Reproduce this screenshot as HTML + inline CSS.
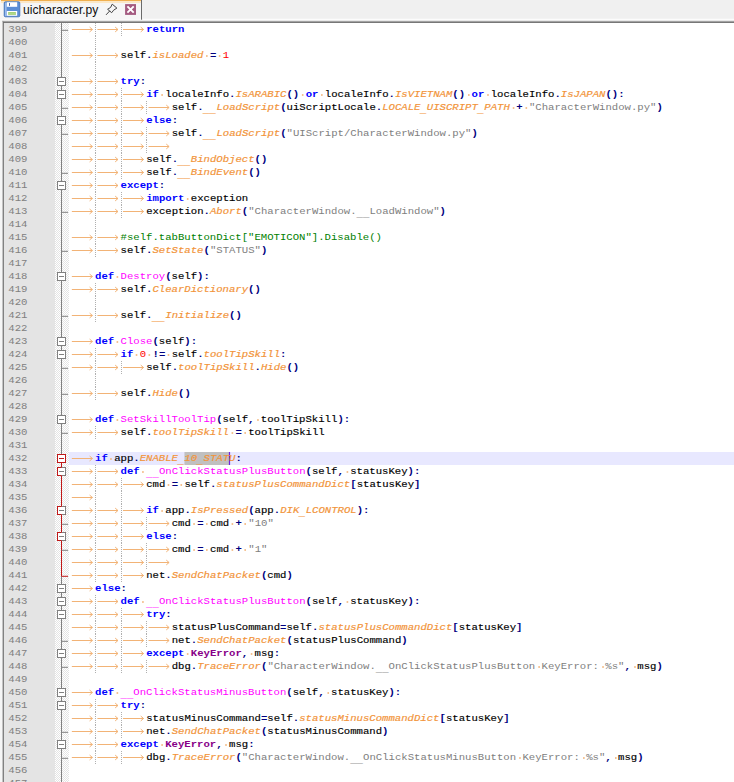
<!DOCTYPE html>
<html><head><meta charset="utf-8"><title>uicharacter.py</title><style>
html,body{margin:0;padding:0}
body{width:734px;height:782px;overflow:hidden;background:#fff;position:relative;font-family:"Liberation Mono",monospace}
#tabbar{position:absolute;left:0;top:0;width:734px;height:21px;background:#f0f0f0}
#tab{position:absolute;left:0;top:0;width:141px;height:20px;background:#f6f6f6;border-right:1.6px solid #6a6a6a}
#tabtop{position:absolute;left:1px;top:0;width:140px;height:1.4px;background:#f0b050}
#tabtop2{position:absolute;left:1px;top:1.4px;width:140px;height:1.2px;background:#fbe8c8}
#title{position:absolute;left:23.1px;top:2.5px;font:12.1px/14px "Liberation Sans",sans-serif;color:#101010;white-space:pre}
.l{position:absolute;transform:scaleY(0.87);transform-origin:0 9.34px;white-space:pre;font-size:10.648px;line-height:13.0px;height:13.0px;color:#000}
.n{position:absolute;transform:scaleY(0.87);transform-origin:0 9.34px;left:8.3px;white-space:pre;font-size:10.648px;line-height:13.0px;height:13.0px;color:#808080}
.kw{color:#0000ff;font-weight:bold}
.op{color:#000080;font-weight:bold}
.attr{color:#f2943a;font-style:italic;-webkit-text-stroke:0.2px #f2943a}
.id{-webkit-text-stroke:0.16px #000}
.u{position:relative;top:3px;font-style:inherit;font-weight:bold}
.num{color:#ff0000}
.str{color:#808080}
.cmt{color:#008000}
.dn{color:#ff00ff}
.kw2{color:#880088;font-weight:bold}
svg{position:absolute;left:0;top:0}
.g{stroke:#b0b0b0;stroke-width:1;stroke-dasharray:1 1}
.a{fill:none;stroke:#f2b376;stroke-width:1}
.d{fill:#f2b376}
</style></head><body>
<div id="tabbar"><div id="tab"></div><div id="tabtop"></div><div id="tabtop2"></div><div id="title">uicharacter.py</div></div>
<svg width="734" height="782" viewBox="0 0 734 782">
<defs><pattern id="dith" width="2" height="2" patternUnits="userSpaceOnUse"><rect width="2" height="2" fill="#ffffff"/><rect width="1" height="1" fill="#e4e4e4"/><rect x="1" y="1" width="1" height="1" fill="#e4e4e4"/></pattern></defs>
<!-- editor bg -->
<rect x="0" y="19.7" width="143" height="1.3" fill="#fcfcfc"/><rect x="143" y="18.8" width="734" height="2.2" fill="#fcfcfc"/>
<rect x="0" y="20" width="2.4" height="782" fill="#f6f6f6"/>
<rect x="2.4" y="20.8" width="734" height="1" fill="#a0a0a0"/>
<rect x="2.4" y="20.8" width="0.9" height="782" fill="#a0a0a0"/>
<rect x="3.2" y="21.8" width="734" height="1.1" fill="#696969"/>
<rect x="3.2" y="21.8" width="0.9" height="782" fill="#696969"/>
<rect x="4" y="23" width="51" height="782" fill="#e4e4e4"/>
<rect x="55" y="23" width="14" height="782" fill="url(#dith)"/>
<rect x="69" y="452.0" width="665" height="13.0" fill="#e8e8ff"/>
<rect x="184.47" y="452.0" width="44.73" height="13.0" fill="#c0c0c0"/>
<rect x="228.90" y="452.0" width="1.2" height="13.0" fill="#7020e0"/>
<line x1="61.5" y1="23" x2="61.5" y2="782" stroke="#808080" stroke-width="1"/><line x1="61.5" y1="458.5" x2="61.5" y2="576.0" stroke="#c01818" stroke-width="1"/><line x1="61.5" y1="30.3" x2="68.0" y2="30.3" stroke="#808080" stroke-width="1"/><rect x="57.5" y="77.5" width="8" height="8" fill="#fff" stroke="#808080" stroke-width="1"/><line x1="59.0" y1="81.5" x2="64.0" y2="81.5" stroke="#808080" stroke-width="1"/><rect x="57.5" y="90.5" width="8" height="8" fill="#fff" stroke="#808080" stroke-width="1"/><line x1="59.0" y1="94.5" x2="64.0" y2="94.5" stroke="#808080" stroke-width="1"/><line x1="61.5" y1="108.3" x2="68.0" y2="108.3" stroke="#808080" stroke-width="1"/><rect x="57.5" y="116.5" width="8" height="8" fill="#fff" stroke="#808080" stroke-width="1"/><line x1="59.0" y1="120.5" x2="64.0" y2="120.5" stroke="#808080" stroke-width="1"/><line x1="61.5" y1="134.3" x2="68.0" y2="134.3" stroke="#808080" stroke-width="1"/><line x1="61.5" y1="173.3" x2="68.0" y2="173.3" stroke="#808080" stroke-width="1"/><rect x="57.5" y="181.5" width="8" height="8" fill="#fff" stroke="#808080" stroke-width="1"/><line x1="59.0" y1="185.5" x2="64.0" y2="185.5" stroke="#808080" stroke-width="1"/><line x1="61.5" y1="212.3" x2="68.0" y2="212.3" stroke="#808080" stroke-width="1"/><line x1="61.5" y1="251.3" x2="68.0" y2="251.3" stroke="#808080" stroke-width="1"/><rect x="57.5" y="272.5" width="8" height="8" fill="#fff" stroke="#808080" stroke-width="1"/><line x1="59.0" y1="276.5" x2="64.0" y2="276.5" stroke="#808080" stroke-width="1"/><line x1="61.5" y1="316.3" x2="68.0" y2="316.3" stroke="#808080" stroke-width="1"/><rect x="57.5" y="337.5" width="8" height="8" fill="#fff" stroke="#808080" stroke-width="1"/><line x1="59.0" y1="341.5" x2="64.0" y2="341.5" stroke="#808080" stroke-width="1"/><rect x="57.5" y="350.5" width="8" height="8" fill="#fff" stroke="#808080" stroke-width="1"/><line x1="59.0" y1="354.5" x2="64.0" y2="354.5" stroke="#808080" stroke-width="1"/><line x1="61.5" y1="368.3" x2="68.0" y2="368.3" stroke="#808080" stroke-width="1"/><line x1="61.5" y1="394.3" x2="68.0" y2="394.3" stroke="#808080" stroke-width="1"/><rect x="57.5" y="415.5" width="8" height="8" fill="#fff" stroke="#808080" stroke-width="1"/><line x1="59.0" y1="419.5" x2="64.0" y2="419.5" stroke="#808080" stroke-width="1"/><line x1="61.5" y1="433.3" x2="68.0" y2="433.3" stroke="#808080" stroke-width="1"/><rect x="57.5" y="454.5" width="8" height="8" fill="#fff" stroke="#c01818" stroke-width="1"/><line x1="59.0" y1="458.5" x2="64.0" y2="458.5" stroke="#c01818" stroke-width="1"/><rect x="57.5" y="467.5" width="8" height="8" fill="#fff" stroke="#c01818" stroke-width="1"/><path d="M61.5 467.5H65.5V475.5H61.5" fill="none" stroke="#808080" stroke-width="1"/><line x1="59.0" y1="471.5" x2="64.0" y2="471.5" stroke="#808080" stroke-width="1"/><rect x="57.5" y="506.5" width="8" height="8" fill="#fff" stroke="#c01818" stroke-width="1"/><path d="M61.5 506.5H65.5V514.5H61.5" fill="none" stroke="#808080" stroke-width="1"/><line x1="59.0" y1="510.5" x2="64.0" y2="510.5" stroke="#808080" stroke-width="1"/><line x1="61.5" y1="524.3" x2="68.0" y2="524.3" stroke="#808080" stroke-width="1"/><rect x="57.5" y="532.5" width="8" height="8" fill="#fff" stroke="#c01818" stroke-width="1"/><path d="M61.5 532.5H65.5V540.5H61.5" fill="none" stroke="#808080" stroke-width="1"/><line x1="59.0" y1="536.5" x2="64.0" y2="536.5" stroke="#808080" stroke-width="1"/><line x1="61.5" y1="550.3" x2="68.0" y2="550.3" stroke="#808080" stroke-width="1"/><line x1="61.5" y1="576.3" x2="68.0" y2="576.3" stroke="#c01818" stroke-width="1"/><rect x="57.5" y="584.5" width="8" height="8" fill="#fff" stroke="#808080" stroke-width="1"/><line x1="59.0" y1="588.5" x2="64.0" y2="588.5" stroke="#808080" stroke-width="1"/><rect x="57.5" y="597.5" width="8" height="8" fill="#fff" stroke="#808080" stroke-width="1"/><line x1="59.0" y1="601.5" x2="64.0" y2="601.5" stroke="#808080" stroke-width="1"/><rect x="57.5" y="610.5" width="8" height="8" fill="#fff" stroke="#808080" stroke-width="1"/><line x1="59.0" y1="614.5" x2="64.0" y2="614.5" stroke="#808080" stroke-width="1"/><line x1="61.5" y1="641.3" x2="68.0" y2="641.3" stroke="#808080" stroke-width="1"/><rect x="57.5" y="649.5" width="8" height="8" fill="#fff" stroke="#808080" stroke-width="1"/><line x1="59.0" y1="653.5" x2="64.0" y2="653.5" stroke="#808080" stroke-width="1"/><line x1="61.5" y1="667.3" x2="68.0" y2="667.3" stroke="#808080" stroke-width="1"/><rect x="57.5" y="688.5" width="8" height="8" fill="#fff" stroke="#808080" stroke-width="1"/><line x1="59.0" y1="692.5" x2="64.0" y2="692.5" stroke="#808080" stroke-width="1"/><rect x="57.5" y="701.5" width="8" height="8" fill="#fff" stroke="#808080" stroke-width="1"/><line x1="59.0" y1="705.5" x2="64.0" y2="705.5" stroke="#808080" stroke-width="1"/><line x1="61.5" y1="732.3" x2="68.0" y2="732.3" stroke="#808080" stroke-width="1"/><rect x="57.5" y="740.5" width="8" height="8" fill="#fff" stroke="#808080" stroke-width="1"/><line x1="59.0" y1="744.5" x2="64.0" y2="744.5" stroke="#808080" stroke-width="1"/><line x1="61.5" y1="758.3" x2="68.0" y2="758.3" stroke="#808080" stroke-width="1"/>
<line class="g" x1="95.50" y1="23.00" x2="95.50" y2="36.00"/><line class="g" x1="121.50" y1="23.00" x2="121.50" y2="36.00"/><path class="a" d="M71.85 29.50H92.41M89.61 27.10L92.41 29.50L89.61 31.90"/><path class="a" d="M97.41 29.50H117.97M115.17 27.10L117.97 29.50L115.17 31.90"/><path class="a" d="M122.97 29.50H143.53M140.73 27.10L143.53 29.50L140.73 31.90"/><line class="g" x1="95.50" y1="36.00" x2="95.50" y2="49.00"/><line class="g" x1="95.50" y1="49.00" x2="95.50" y2="62.00"/><path class="a" d="M71.85 55.50H92.41M89.61 53.10L92.41 55.50L89.61 57.90"/><path class="a" d="M97.41 55.50H117.97M115.17 53.10L117.97 55.50L115.17 57.90"/><rect class="d" x="206.03" y="55.20" width="1.6" height="1.6"/><rect class="d" x="218.81" y="55.20" width="1.6" height="1.6"/><line class="g" x1="95.50" y1="62.00" x2="95.50" y2="75.00"/><line class="g" x1="95.50" y1="75.00" x2="95.50" y2="88.00"/><path class="a" d="M71.85 81.50H92.41M89.61 79.10L92.41 81.50L89.61 83.90"/><path class="a" d="M97.41 81.50H117.97M115.17 79.10L117.97 81.50L115.17 83.90"/><line class="g" x1="95.50" y1="88.00" x2="95.50" y2="101.00"/><line class="g" x1="121.50" y1="88.00" x2="121.50" y2="101.00"/><path class="a" d="M71.85 94.50H92.41M89.61 92.10L92.41 94.50L89.61 96.90"/><path class="a" d="M97.41 94.50H117.97M115.17 92.10L117.97 94.50L115.17 96.90"/><path class="a" d="M122.97 94.50H143.53M140.73 92.10L143.53 94.50L140.73 96.90"/><rect class="d" x="161.30" y="94.20" width="1.6" height="1.6"/><rect class="d" x="301.88" y="94.20" width="1.6" height="1.6"/><rect class="d" x="321.05" y="94.20" width="1.6" height="1.6"/><rect class="d" x="468.02" y="94.20" width="1.6" height="1.6"/><rect class="d" x="487.19" y="94.20" width="1.6" height="1.6"/><line class="g" x1="95.50" y1="101.00" x2="95.50" y2="114.00"/><line class="g" x1="121.50" y1="101.00" x2="121.50" y2="114.00"/><line class="g" x1="146.50" y1="101.00" x2="146.50" y2="114.00"/><path class="a" d="M71.85 107.50H92.41M89.61 105.10L92.41 107.50L89.61 109.90"/><path class="a" d="M97.41 107.50H117.97M115.17 105.10L117.97 107.50L115.17 109.90"/><path class="a" d="M122.97 107.50H143.53M140.73 105.10L143.53 107.50L140.73 109.90"/><path class="a" d="M148.53 107.50H169.09M166.29 105.10L169.09 107.50L166.29 109.90"/><rect class="d" x="512.75" y="107.20" width="1.6" height="1.6"/><rect class="d" x="525.54" y="107.20" width="1.6" height="1.6"/><line class="g" x1="95.50" y1="114.00" x2="95.50" y2="127.00"/><line class="g" x1="121.50" y1="114.00" x2="121.50" y2="127.00"/><path class="a" d="M71.85 120.50H92.41M89.61 118.10L92.41 120.50L89.61 122.90"/><path class="a" d="M97.41 120.50H117.97M115.17 118.10L117.97 120.50L115.17 122.90"/><path class="a" d="M122.97 120.50H143.53M140.73 118.10L143.53 120.50L140.73 122.90"/><line class="g" x1="95.50" y1="127.00" x2="95.50" y2="140.00"/><line class="g" x1="121.50" y1="127.00" x2="121.50" y2="140.00"/><line class="g" x1="146.50" y1="127.00" x2="146.50" y2="140.00"/><path class="a" d="M71.85 133.50H92.41M89.61 131.10L92.41 133.50L89.61 135.90"/><path class="a" d="M97.41 133.50H117.97M115.17 131.10L117.97 133.50L115.17 135.90"/><path class="a" d="M122.97 133.50H143.53M140.73 131.10L143.53 133.50L140.73 135.90"/><path class="a" d="M148.53 133.50H169.09M166.29 131.10L169.09 133.50L166.29 135.90"/><line class="g" x1="95.50" y1="140.00" x2="95.50" y2="153.00"/><line class="g" x1="121.50" y1="140.00" x2="121.50" y2="153.00"/><line class="g" x1="146.50" y1="140.00" x2="146.50" y2="153.00"/><path class="a" d="M71.85 146.50H92.41M89.61 144.10L92.41 146.50L89.61 148.90"/><path class="a" d="M97.41 146.50H117.97M115.17 144.10L117.97 146.50L115.17 148.90"/><path class="a" d="M122.97 146.50H143.53M140.73 144.10L143.53 146.50L140.73 148.90"/><path class="a" d="M148.53 146.50H169.09M166.29 144.10L169.09 146.50L166.29 148.90"/><line class="g" x1="95.50" y1="153.00" x2="95.50" y2="166.00"/><line class="g" x1="121.50" y1="153.00" x2="121.50" y2="166.00"/><path class="a" d="M71.85 159.50H92.41M89.61 157.10L92.41 159.50L89.61 161.90"/><path class="a" d="M97.41 159.50H117.97M115.17 157.10L117.97 159.50L115.17 161.90"/><path class="a" d="M122.97 159.50H143.53M140.73 157.10L143.53 159.50L140.73 161.90"/><line class="g" x1="95.50" y1="166.00" x2="95.50" y2="179.00"/><line class="g" x1="121.50" y1="166.00" x2="121.50" y2="179.00"/><path class="a" d="M71.85 172.50H92.41M89.61 170.10L92.41 172.50L89.61 174.90"/><path class="a" d="M97.41 172.50H117.97M115.17 170.10L117.97 172.50L115.17 174.90"/><path class="a" d="M122.97 172.50H143.53M140.73 170.10L143.53 172.50L140.73 174.90"/><line class="g" x1="95.50" y1="179.00" x2="95.50" y2="192.00"/><path class="a" d="M71.85 185.50H92.41M89.61 183.10L92.41 185.50L89.61 187.90"/><path class="a" d="M97.41 185.50H117.97M115.17 183.10L117.97 185.50L115.17 187.90"/><line class="g" x1="95.50" y1="192.00" x2="95.50" y2="205.00"/><line class="g" x1="121.50" y1="192.00" x2="121.50" y2="205.00"/><path class="a" d="M71.85 198.50H92.41M89.61 196.10L92.41 198.50L89.61 200.90"/><path class="a" d="M97.41 198.50H117.97M115.17 196.10L117.97 198.50L115.17 200.90"/><path class="a" d="M122.97 198.50H143.53M140.73 196.10L143.53 198.50L140.73 200.90"/><rect class="d" x="186.86" y="198.20" width="1.6" height="1.6"/><line class="g" x1="95.50" y1="205.00" x2="95.50" y2="218.00"/><line class="g" x1="121.50" y1="205.00" x2="121.50" y2="218.00"/><path class="a" d="M71.85 211.50H92.41M89.61 209.10L92.41 211.50L89.61 213.90"/><path class="a" d="M97.41 211.50H117.97M115.17 209.10L117.97 211.50L115.17 213.90"/><path class="a" d="M122.97 211.50H143.53M140.73 209.10L143.53 211.50L140.73 213.90"/><line class="g" x1="95.50" y1="218.00" x2="95.50" y2="231.00"/><line class="g" x1="95.50" y1="231.00" x2="95.50" y2="244.00"/><path class="a" d="M71.85 237.50H92.41M89.61 235.10L92.41 237.50L89.61 239.90"/><path class="a" d="M97.41 237.50H117.97M115.17 235.10L117.97 237.50L115.17 239.90"/><line class="g" x1="95.50" y1="244.00" x2="95.50" y2="257.00"/><path class="a" d="M71.85 250.50H92.41M89.61 248.10L92.41 250.50L89.61 252.90"/><path class="a" d="M97.41 250.50H117.97M115.17 248.10L117.97 250.50L115.17 252.90"/><path class="a" d="M71.85 276.50H92.41M89.61 274.10L92.41 276.50L89.61 278.90"/><rect class="d" x="116.58" y="276.20" width="1.6" height="1.6"/><line class="g" x1="95.50" y1="283.00" x2="95.50" y2="296.00"/><path class="a" d="M71.85 289.50H92.41M89.61 287.10L92.41 289.50L89.61 291.90"/><path class="a" d="M97.41 289.50H117.97M115.17 287.10L117.97 289.50L115.17 291.90"/><line class="g" x1="95.50" y1="296.00" x2="95.50" y2="309.00"/><line class="g" x1="95.50" y1="309.00" x2="95.50" y2="322.00"/><path class="a" d="M71.85 315.50H92.41M89.61 313.10L92.41 315.50L89.61 317.90"/><path class="a" d="M97.41 315.50H117.97M115.17 313.10L117.97 315.50L115.17 317.90"/><path class="a" d="M71.85 341.50H92.41M89.61 339.10L92.41 341.50L89.61 343.90"/><rect class="d" x="116.58" y="341.20" width="1.6" height="1.6"/><line class="g" x1="95.50" y1="348.00" x2="95.50" y2="361.00"/><path class="a" d="M71.85 354.50H92.41M89.61 352.10L92.41 354.50L89.61 356.90"/><path class="a" d="M97.41 354.50H117.97M115.17 352.10L117.97 354.50L115.17 356.90"/><rect class="d" x="135.74" y="354.20" width="1.6" height="1.6"/><rect class="d" x="148.52" y="354.20" width="1.6" height="1.6"/><rect class="d" x="167.69" y="354.20" width="1.6" height="1.6"/><line class="g" x1="95.50" y1="361.00" x2="95.50" y2="374.00"/><line class="g" x1="121.50" y1="361.00" x2="121.50" y2="374.00"/><path class="a" d="M71.85 367.50H92.41M89.61 365.10L92.41 367.50L89.61 369.90"/><path class="a" d="M97.41 367.50H117.97M115.17 365.10L117.97 367.50L115.17 369.90"/><path class="a" d="M122.97 367.50H143.53M140.73 365.10L143.53 367.50L140.73 369.90"/><line class="g" x1="95.50" y1="374.00" x2="95.50" y2="387.00"/><line class="g" x1="95.50" y1="387.00" x2="95.50" y2="400.00"/><path class="a" d="M71.85 393.50H92.41M89.61 391.10L92.41 393.50L89.61 395.90"/><path class="a" d="M97.41 393.50H117.97M115.17 391.10L117.97 393.50L115.17 395.90"/><path class="a" d="M71.85 419.50H92.41M89.61 417.10L92.41 419.50L89.61 421.90"/><rect class="d" x="116.58" y="419.20" width="1.6" height="1.6"/><rect class="d" x="257.15" y="419.20" width="1.6" height="1.6"/><line class="g" x1="95.50" y1="426.00" x2="95.50" y2="439.00"/><path class="a" d="M71.85 432.50H92.41M89.61 430.10L92.41 432.50L89.61 434.90"/><path class="a" d="M97.41 432.50H117.97M115.17 430.10L117.97 432.50L115.17 434.90"/><rect class="d" x="231.59" y="432.20" width="1.6" height="1.6"/><rect class="d" x="244.38" y="432.20" width="1.6" height="1.6"/><path class="a" d="M71.85 458.50H92.41M89.61 456.10L92.41 458.50L89.61 460.90"/><rect class="d" x="110.18" y="458.20" width="1.6" height="1.6"/><line class="g" x1="95.50" y1="465.00" x2="95.50" y2="478.00"/><path class="a" d="M71.85 471.50H92.41M89.61 469.10L92.41 471.50L89.61 473.90"/><path class="a" d="M97.41 471.50H117.97M115.17 469.10L117.97 471.50L115.17 473.90"/><rect class="d" x="142.13" y="471.20" width="1.6" height="1.6"/><rect class="d" x="346.61" y="471.20" width="1.6" height="1.6"/><line class="g" x1="95.50" y1="478.00" x2="95.50" y2="491.00"/><line class="g" x1="121.50" y1="478.00" x2="121.50" y2="491.00"/><path class="a" d="M71.85 484.50H92.41M89.61 482.10L92.41 484.50L89.61 486.90"/><path class="a" d="M97.41 484.50H117.97M115.17 482.10L117.97 484.50L115.17 486.90"/><path class="a" d="M122.97 484.50H143.53M140.73 482.10L143.53 484.50L140.73 486.90"/><rect class="d" x="167.69" y="484.20" width="1.6" height="1.6"/><rect class="d" x="180.47" y="484.20" width="1.6" height="1.6"/><line class="g" x1="95.50" y1="491.00" x2="95.50" y2="504.00"/><line class="g" x1="121.50" y1="491.00" x2="121.50" y2="504.00"/><path class="a" d="M71.85 497.50H92.41M89.61 495.10L92.41 497.50L89.61 499.90"/><line class="g" x1="95.50" y1="504.00" x2="95.50" y2="517.00"/><line class="g" x1="121.50" y1="504.00" x2="121.50" y2="517.00"/><path class="a" d="M71.85 510.50H92.41M89.61 508.10L92.41 510.50L89.61 512.90"/><path class="a" d="M97.41 510.50H117.97M115.17 508.10L117.97 510.50L115.17 512.90"/><path class="a" d="M122.97 510.50H143.53M140.73 508.10L143.53 510.50L140.73 512.90"/><rect class="d" x="161.30" y="510.20" width="1.6" height="1.6"/><line class="g" x1="95.50" y1="517.00" x2="95.50" y2="530.00"/><line class="g" x1="121.50" y1="517.00" x2="121.50" y2="530.00"/><line class="g" x1="146.50" y1="517.00" x2="146.50" y2="530.00"/><path class="a" d="M71.85 523.50H92.41M89.61 521.10L92.41 523.50L89.61 525.90"/><path class="a" d="M97.41 523.50H117.97M115.17 521.10L117.97 523.50L115.17 525.90"/><path class="a" d="M122.97 523.50H143.53M140.73 521.10L143.53 523.50L140.73 525.90"/><path class="a" d="M148.53 523.50H169.09M166.29 521.10L169.09 523.50L166.29 525.90"/><rect class="d" x="193.25" y="523.20" width="1.6" height="1.6"/><rect class="d" x="206.03" y="523.20" width="1.6" height="1.6"/><rect class="d" x="231.59" y="523.20" width="1.6" height="1.6"/><rect class="d" x="244.38" y="523.20" width="1.6" height="1.6"/><line class="g" x1="95.50" y1="530.00" x2="95.50" y2="543.00"/><line class="g" x1="121.50" y1="530.00" x2="121.50" y2="543.00"/><path class="a" d="M71.85 536.50H92.41M89.61 534.10L92.41 536.50L89.61 538.90"/><path class="a" d="M97.41 536.50H117.97M115.17 534.10L117.97 536.50L115.17 538.90"/><path class="a" d="M122.97 536.50H143.53M140.73 534.10L143.53 536.50L140.73 538.90"/><line class="g" x1="95.50" y1="543.00" x2="95.50" y2="556.00"/><line class="g" x1="121.50" y1="543.00" x2="121.50" y2="556.00"/><line class="g" x1="146.50" y1="543.00" x2="146.50" y2="556.00"/><path class="a" d="M71.85 549.50H92.41M89.61 547.10L92.41 549.50L89.61 551.90"/><path class="a" d="M97.41 549.50H117.97M115.17 547.10L117.97 549.50L115.17 551.90"/><path class="a" d="M122.97 549.50H143.53M140.73 547.10L143.53 549.50L140.73 551.90"/><path class="a" d="M148.53 549.50H169.09M166.29 547.10L169.09 549.50L166.29 551.90"/><rect class="d" x="193.25" y="549.20" width="1.6" height="1.6"/><rect class="d" x="206.03" y="549.20" width="1.6" height="1.6"/><rect class="d" x="231.59" y="549.20" width="1.6" height="1.6"/><rect class="d" x="244.38" y="549.20" width="1.6" height="1.6"/><line class="g" x1="95.50" y1="556.00" x2="95.50" y2="569.00"/><line class="g" x1="121.50" y1="556.00" x2="121.50" y2="569.00"/><line class="g" x1="146.50" y1="556.00" x2="146.50" y2="569.00"/><path class="a" d="M71.85 562.50H92.41M89.61 560.10L92.41 562.50L89.61 564.90"/><path class="a" d="M97.41 562.50H117.97M115.17 560.10L117.97 562.50L115.17 564.90"/><path class="a" d="M122.97 562.50H143.53M140.73 560.10L143.53 562.50L140.73 564.90"/><path class="a" d="M148.53 562.50H169.09M166.29 560.10L169.09 562.50L166.29 564.90"/><line class="g" x1="95.50" y1="569.00" x2="95.50" y2="582.00"/><line class="g" x1="121.50" y1="569.00" x2="121.50" y2="582.00"/><path class="a" d="M71.85 575.50H92.41M89.61 573.10L92.41 575.50L89.61 577.90"/><path class="a" d="M97.41 575.50H117.97M115.17 573.10L117.97 575.50L115.17 577.90"/><path class="a" d="M122.97 575.50H143.53M140.73 573.10L143.53 575.50L140.73 577.90"/><path class="a" d="M71.85 588.50H92.41M89.61 586.10L92.41 588.50L89.61 590.90"/><line class="g" x1="95.50" y1="595.00" x2="95.50" y2="608.00"/><path class="a" d="M71.85 601.50H92.41M89.61 599.10L92.41 601.50L89.61 603.90"/><path class="a" d="M97.41 601.50H117.97M115.17 599.10L117.97 601.50L115.17 603.90"/><rect class="d" x="142.13" y="601.20" width="1.6" height="1.6"/><rect class="d" x="346.61" y="601.20" width="1.6" height="1.6"/><line class="g" x1="95.50" y1="608.00" x2="95.50" y2="621.00"/><line class="g" x1="121.50" y1="608.00" x2="121.50" y2="621.00"/><path class="a" d="M71.85 614.50H92.41M89.61 612.10L92.41 614.50L89.61 616.90"/><path class="a" d="M97.41 614.50H117.97M115.17 612.10L117.97 614.50L115.17 616.90"/><path class="a" d="M122.97 614.50H143.53M140.73 612.10L143.53 614.50L140.73 616.90"/><line class="g" x1="95.50" y1="621.00" x2="95.50" y2="634.00"/><line class="g" x1="121.50" y1="621.00" x2="121.50" y2="634.00"/><line class="g" x1="146.50" y1="621.00" x2="146.50" y2="634.00"/><path class="a" d="M71.85 627.50H92.41M89.61 625.10L92.41 627.50L89.61 629.90"/><path class="a" d="M97.41 627.50H117.97M115.17 625.10L117.97 627.50L115.17 629.90"/><path class="a" d="M122.97 627.50H143.53M140.73 625.10L143.53 627.50L140.73 629.90"/><path class="a" d="M148.53 627.50H169.09M166.29 625.10L169.09 627.50L166.29 629.90"/><line class="g" x1="95.50" y1="634.00" x2="95.50" y2="647.00"/><line class="g" x1="121.50" y1="634.00" x2="121.50" y2="647.00"/><line class="g" x1="146.50" y1="634.00" x2="146.50" y2="647.00"/><path class="a" d="M71.85 640.50H92.41M89.61 638.10L92.41 640.50L89.61 642.90"/><path class="a" d="M97.41 640.50H117.97M115.17 638.10L117.97 640.50L115.17 642.90"/><path class="a" d="M122.97 640.50H143.53M140.73 638.10L143.53 640.50L140.73 642.90"/><path class="a" d="M148.53 640.50H169.09M166.29 638.10L169.09 640.50L166.29 642.90"/><line class="g" x1="95.50" y1="647.00" x2="95.50" y2="660.00"/><line class="g" x1="121.50" y1="647.00" x2="121.50" y2="660.00"/><path class="a" d="M71.85 653.50H92.41M89.61 651.10L92.41 653.50L89.61 655.90"/><path class="a" d="M97.41 653.50H117.97M115.17 651.10L117.97 653.50L115.17 655.90"/><path class="a" d="M122.97 653.50H143.53M140.73 651.10L143.53 653.50L140.73 655.90"/><rect class="d" x="186.86" y="653.20" width="1.6" height="1.6"/><rect class="d" x="250.76" y="653.20" width="1.6" height="1.6"/><line class="g" x1="95.50" y1="660.00" x2="95.50" y2="673.00"/><line class="g" x1="121.50" y1="660.00" x2="121.50" y2="673.00"/><line class="g" x1="146.50" y1="660.00" x2="146.50" y2="673.00"/><path class="a" d="M71.85 666.50H92.41M89.61 664.10L92.41 666.50L89.61 668.90"/><path class="a" d="M97.41 666.50H117.97M115.17 664.10L117.97 666.50L115.17 668.90"/><path class="a" d="M122.97 666.50H143.53M140.73 664.10L143.53 666.50L140.73 668.90"/><path class="a" d="M148.53 666.50H169.09M166.29 664.10L169.09 666.50L166.29 668.90"/><rect class="d" x="538.32" y="666.20" width="1.6" height="1.6"/><rect class="d" x="602.22" y="666.20" width="1.6" height="1.6"/><rect class="d" x="634.17" y="666.20" width="1.6" height="1.6"/><path class="a" d="M71.85 692.50H92.41M89.61 690.10L92.41 692.50L89.61 694.90"/><rect class="d" x="116.58" y="692.20" width="1.6" height="1.6"/><rect class="d" x="327.44" y="692.20" width="1.6" height="1.6"/><line class="g" x1="95.50" y1="699.00" x2="95.50" y2="712.00"/><path class="a" d="M71.85 705.50H92.41M89.61 703.10L92.41 705.50L89.61 707.90"/><path class="a" d="M97.41 705.50H117.97M115.17 703.10L117.97 705.50L115.17 707.90"/><line class="g" x1="95.50" y1="712.00" x2="95.50" y2="725.00"/><line class="g" x1="121.50" y1="712.00" x2="121.50" y2="725.00"/><path class="a" d="M71.85 718.50H92.41M89.61 716.10L92.41 718.50L89.61 720.90"/><path class="a" d="M97.41 718.50H117.97M115.17 716.10L117.97 718.50L115.17 720.90"/><path class="a" d="M122.97 718.50H143.53M140.73 716.10L143.53 718.50L140.73 720.90"/><line class="g" x1="95.50" y1="725.00" x2="95.50" y2="738.00"/><line class="g" x1="121.50" y1="725.00" x2="121.50" y2="738.00"/><path class="a" d="M71.85 731.50H92.41M89.61 729.10L92.41 731.50L89.61 733.90"/><path class="a" d="M97.41 731.50H117.97M115.17 729.10L117.97 731.50L115.17 733.90"/><path class="a" d="M122.97 731.50H143.53M140.73 729.10L143.53 731.50L140.73 733.90"/><line class="g" x1="95.50" y1="738.00" x2="95.50" y2="751.00"/><path class="a" d="M71.85 744.50H92.41M89.61 742.10L92.41 744.50L89.61 746.90"/><path class="a" d="M97.41 744.50H117.97M115.17 742.10L117.97 744.50L115.17 746.90"/><rect class="d" x="161.30" y="744.20" width="1.6" height="1.6"/><rect class="d" x="225.20" y="744.20" width="1.6" height="1.6"/><line class="g" x1="95.50" y1="751.00" x2="95.50" y2="764.00"/><line class="g" x1="121.50" y1="751.00" x2="121.50" y2="764.00"/><path class="a" d="M71.85 757.50H92.41M89.61 755.10L92.41 757.50L89.61 759.90"/><path class="a" d="M97.41 757.50H117.97M115.17 755.10L117.97 757.50L115.17 759.90"/><path class="a" d="M122.97 757.50H143.53M140.73 755.10L143.53 757.50L140.73 759.90"/><rect class="d" x="519.15" y="757.20" width="1.6" height="1.6"/><rect class="d" x="583.05" y="757.20" width="1.6" height="1.6"/><rect class="d" x="615.00" y="757.20" width="1.6" height="1.6"/>
<!-- save icon -->
<g>
<rect x="4.2" y="1.8" width="15.6" height="15" rx="1.2" fill="#5c8ed6" stroke="#3d6db3" stroke-width="0.8"/>
<rect x="5.2" y="2.6" width="1.3" height="13.4" fill="#a8c8f4"/>
<rect x="6.8" y="2.2" width="10.4" height="4.6" fill="#ffffff"/>
<rect x="9" y="3.1" width="1" height="2.7" fill="#4a68a8"/>
<rect x="6.8" y="11" width="10.4" height="4.8" fill="#ffffff"/>
<rect x="8.1" y="12.1" width="7.8" height="2.7" fill="#9ccc6c"/>
<rect x="8.1" y="13.2" width="7.8" height="0.5" fill="#c8e4a8"/>
</g>
<!-- pin -->
<g fill="none" stroke="#444444" stroke-width="1" stroke-linejoin="round" stroke-linecap="round">
<path d="M112.5 4.4L116.9 8.1L113.6 10.2L111.7 12.7L107.6 9.3L110.3 7.6Z"/>
<path d="M109.5 11.2L106.3 14.6"/>
</g>
<!-- close -->
<rect x="125.1" y="4.1" width="10.9" height="10.8" fill="#a45a80"/>
<path d="M127.4 6.3L133.7 12.7M133.7 6.3L127.4 12.7" stroke="#fff" stroke-width="1.9" fill="none"/>
</svg>
<div class="n" style="top:23.00px">399</div><div class="n" style="top:36.00px">400</div><div class="n" style="top:49.00px">401</div><div class="n" style="top:62.00px">402</div><div class="n" style="top:75.00px">403</div><div class="n" style="top:88.00px">404</div><div class="n" style="top:101.00px">405</div><div class="n" style="top:114.00px">406</div><div class="n" style="top:127.00px">407</div><div class="n" style="top:140.00px">408</div><div class="n" style="top:153.00px">409</div><div class="n" style="top:166.00px">410</div><div class="n" style="top:179.00px">411</div><div class="n" style="top:192.00px">412</div><div class="n" style="top:205.00px">413</div><div class="n" style="top:218.00px">414</div><div class="n" style="top:231.00px">415</div><div class="n" style="top:244.00px">416</div><div class="n" style="top:257.00px">417</div><div class="n" style="top:270.00px">418</div><div class="n" style="top:283.00px">419</div><div class="n" style="top:296.00px">420</div><div class="n" style="top:309.00px">421</div><div class="n" style="top:322.00px">422</div><div class="n" style="top:335.00px">423</div><div class="n" style="top:348.00px">424</div><div class="n" style="top:361.00px">425</div><div class="n" style="top:374.00px">426</div><div class="n" style="top:387.00px">427</div><div class="n" style="top:400.00px">428</div><div class="n" style="top:413.00px">429</div><div class="n" style="top:426.00px">430</div><div class="n" style="top:439.00px">431</div><div class="n" style="top:452.00px">432</div><div class="n" style="top:465.00px">433</div><div class="n" style="top:478.00px">434</div><div class="n" style="top:491.00px">435</div><div class="n" style="top:504.00px">436</div><div class="n" style="top:517.00px">437</div><div class="n" style="top:530.00px">438</div><div class="n" style="top:543.00px">439</div><div class="n" style="top:556.00px">440</div><div class="n" style="top:569.00px">441</div><div class="n" style="top:582.00px">442</div><div class="n" style="top:595.00px">443</div><div class="n" style="top:608.00px">444</div><div class="n" style="top:621.00px">445</div><div class="n" style="top:634.00px">446</div><div class="n" style="top:647.00px">447</div><div class="n" style="top:660.00px">448</div><div class="n" style="top:673.00px">449</div><div class="n" style="top:686.00px">450</div><div class="n" style="top:699.00px">451</div><div class="n" style="top:712.00px">452</div><div class="n" style="top:725.00px">453</div><div class="n" style="top:738.00px">454</div><div class="n" style="top:751.00px">455</div><div class="n" style="top:764.00px">456</div><div class="n" style="top:777.00px">457</div>
<div class="l" style="left:146.13px;top:23.00px"><span class="kw">return</span></div><div class="l" style="left:120.57px;top:49.00px"><span class="id">self</span><span class="op">.</span><span class="attr">isLoaded</span> <span class="op">=</span> <span class="num">1</span></div><div class="l" style="left:120.57px;top:75.00px"><span class="kw">try</span><span class="op">:</span></div><div class="l" style="left:146.13px;top:88.00px"><span class="kw">if</span> <span class="id">localeInfo</span><span class="op">.</span><span class="attr">IsARABIC</span><span class="op">(</span><span class="op">)</span> <span class="kw">or</span> <span class="id">localeInfo</span><span class="op">.</span><span class="attr">IsVIETNAM</span><span class="op">(</span><span class="op">)</span> <span class="kw">or</span> <span class="id">localeInfo</span><span class="op">.</span><span class="attr">IsJAPAN</span><span class="op">(</span><span class="op">)</span><span class="op">:</span></div><div class="l" style="left:171.69px;top:101.00px"><span class="id">self</span><span class="op">.</span><span class="attr"><i class="u">_</i><i class="u">_</i>LoadScript</span><span class="op">(</span><span class="id">uiScriptLocale</span><span class="op">.</span><span class="attr">LOCALE<i class="u">_</i>UISCRIPT<i class="u">_</i>PATH</span> <span class="op">+</span> <span class="str">&quot;CharacterWindow.py&quot;</span><span class="op">)</span></div><div class="l" style="left:146.13px;top:114.00px"><span class="kw">else</span><span class="op">:</span></div><div class="l" style="left:171.69px;top:127.00px"><span class="id">self</span><span class="op">.</span><span class="attr"><i class="u">_</i><i class="u">_</i>LoadScript</span><span class="op">(</span><span class="str">&quot;UIScript/CharacterWindow.py&quot;</span><span class="op">)</span></div><div class="l" style="left:146.13px;top:153.00px"><span class="id">self</span><span class="op">.</span><span class="attr"><i class="u">_</i><i class="u">_</i>BindObject</span><span class="op">(</span><span class="op">)</span></div><div class="l" style="left:146.13px;top:166.00px"><span class="id">self</span><span class="op">.</span><span class="attr"><i class="u">_</i><i class="u">_</i>BindEvent</span><span class="op">(</span><span class="op">)</span></div><div class="l" style="left:120.57px;top:179.00px"><span class="kw">except</span><span class="op">:</span></div><div class="l" style="left:146.13px;top:192.00px"><span class="kw">import</span> <span class="id">exception</span></div><div class="l" style="left:146.13px;top:205.00px"><span class="id">exception</span><span class="op">.</span><span class="attr">Abort</span><span class="op">(</span><span class="str">&quot;CharacterWindow.<i class="u">_</i><i class="u">_</i>LoadWindow&quot;</span><span class="op">)</span></div><div class="l" style="left:120.57px;top:231.00px"><span class="cmt">#self.tabButtonDict[&quot;EMOTICON&quot;].Disable()</span></div><div class="l" style="left:120.57px;top:244.00px"><span class="id">self</span><span class="op">.</span><span class="attr">SetState</span><span class="op">(</span><span class="str">&quot;STATUS&quot;</span><span class="op">)</span></div><div class="l" style="left:95.01px;top:270.00px"><span class="kw">def</span> <span class="dn">Destroy</span><span class="op">(</span><span class="id">self</span><span class="op">)</span><span class="op">:</span></div><div class="l" style="left:120.57px;top:283.00px"><span class="id">self</span><span class="op">.</span><span class="attr">ClearDictionary</span><span class="op">(</span><span class="op">)</span></div><div class="l" style="left:120.57px;top:309.00px"><span class="id">self</span><span class="op">.</span><span class="attr"><i class="u">_</i><i class="u">_</i>Initialize</span><span class="op">(</span><span class="op">)</span></div><div class="l" style="left:95.01px;top:335.00px"><span class="kw">def</span> <span class="dn">Close</span><span class="op">(</span><span class="id">self</span><span class="op">)</span><span class="op">:</span></div><div class="l" style="left:120.57px;top:348.00px"><span class="kw">if</span> <span class="num">0</span> <span class="op">!</span><span class="op">=</span> <span class="id">self</span><span class="op">.</span><span class="attr">toolTipSkill</span><span class="op">:</span></div><div class="l" style="left:146.13px;top:361.00px"><span class="id">self</span><span class="op">.</span><span class="attr">toolTipSkill</span><span class="op">.</span><span class="attr">Hide</span><span class="op">(</span><span class="op">)</span></div><div class="l" style="left:120.57px;top:387.00px"><span class="id">self</span><span class="op">.</span><span class="attr">Hide</span><span class="op">(</span><span class="op">)</span></div><div class="l" style="left:95.01px;top:413.00px"><span class="kw">def</span> <span class="dn">SetSkillToolTip</span><span class="op">(</span><span class="id">self</span><span class="op">,</span> <span class="id">toolTipSkill</span><span class="op">)</span><span class="op">:</span></div><div class="l" style="left:120.57px;top:426.00px"><span class="id">self</span><span class="op">.</span><span class="attr">toolTipSkill</span> <span class="op">=</span> <span class="id">toolTipSkill</span></div><div class="l" style="left:95.01px;top:452.00px"><span class="kw">if</span> <span class="id">app</span><span class="op">.</span><span class="attr">ENABLE<i class="u">_</i>10<i class="u">_</i>STATU</span><span class="op">:</span></div><div class="l" style="left:120.57px;top:465.00px"><span class="kw">def</span> <span class="dn"><i class="u">_</i><i class="u">_</i>OnClickStatusPlusButton</span><span class="op">(</span><span class="id">self</span><span class="op">,</span> <span class="id">statusKey</span><span class="op">)</span><span class="op">:</span></div><div class="l" style="left:146.13px;top:478.00px"><span class="id">cmd</span> <span class="op">=</span> <span class="id">self</span><span class="op">.</span><span class="attr">statusPlusCommandDict</span><span class="op">[</span><span class="id">statusKey</span><span class="op">]</span></div><div class="l" style="left:146.13px;top:504.00px"><span class="kw">if</span> <span class="id">app</span><span class="op">.</span><span class="attr">IsPressed</span><span class="op">(</span><span class="id">app</span><span class="op">.</span><span class="attr">DIK<i class="u">_</i>LCONTROL</span><span class="op">)</span><span class="op">:</span></div><div class="l" style="left:171.69px;top:517.00px"><span class="id">cmd</span> <span class="op">=</span> <span class="id">cmd</span> <span class="op">+</span> <span class="str">&quot;10&quot;</span></div><div class="l" style="left:146.13px;top:530.00px"><span class="kw">else</span><span class="op">:</span></div><div class="l" style="left:171.69px;top:543.00px"><span class="id">cmd</span> <span class="op">=</span> <span class="id">cmd</span> <span class="op">+</span> <span class="str">&quot;1&quot;</span></div><div class="l" style="left:146.13px;top:569.00px"><span class="id">net</span><span class="op">.</span><span class="attr">SendChatPacket</span><span class="op">(</span><span class="id">cmd</span><span class="op">)</span></div><div class="l" style="left:95.01px;top:582.00px"><span class="kw">else</span><span class="op">:</span></div><div class="l" style="left:120.57px;top:595.00px"><span class="kw">def</span> <span class="dn"><i class="u">_</i><i class="u">_</i>OnClickStatusPlusButton</span><span class="op">(</span><span class="id">self</span><span class="op">,</span> <span class="id">statusKey</span><span class="op">)</span><span class="op">:</span></div><div class="l" style="left:146.13px;top:608.00px"><span class="kw">try</span><span class="op">:</span></div><div class="l" style="left:171.69px;top:621.00px"><span class="id">statusPlusCommand</span><span class="op">=</span><span class="id">self</span><span class="op">.</span><span class="attr">statusPlusCommandDict</span><span class="op">[</span><span class="id">statusKey</span><span class="op">]</span></div><div class="l" style="left:171.69px;top:634.00px"><span class="id">net</span><span class="op">.</span><span class="attr">SendChatPacket</span><span class="op">(</span><span class="id">statusPlusCommand</span><span class="op">)</span></div><div class="l" style="left:146.13px;top:647.00px"><span class="kw">except</span> <span class="kw2">KeyError</span><span class="op">,</span> <span class="id">msg</span><span class="op">:</span></div><div class="l" style="left:171.69px;top:660.00px"><span class="id">dbg</span><span class="op">.</span><span class="attr">TraceError</span><span class="op">(</span><span class="str">&quot;CharacterWindow.<i class="u">_</i><i class="u">_</i>OnClickStatusPlusButton KeyError: %s&quot;</span><span class="op">,</span> <span class="id">msg</span><span class="op">)</span></div><div class="l" style="left:95.01px;top:686.00px"><span class="kw">def</span> <span class="dn"><i class="u">_</i><i class="u">_</i>OnClickStatusMinusButton</span><span class="op">(</span><span class="id">self</span><span class="op">,</span> <span class="id">statusKey</span><span class="op">)</span><span class="op">:</span></div><div class="l" style="left:120.57px;top:699.00px"><span class="kw">try</span><span class="op">:</span></div><div class="l" style="left:146.13px;top:712.00px"><span class="id">statusMinusCommand</span><span class="op">=</span><span class="id">self</span><span class="op">.</span><span class="attr">statusMinusCommandDict</span><span class="op">[</span><span class="id">statusKey</span><span class="op">]</span></div><div class="l" style="left:146.13px;top:725.00px"><span class="id">net</span><span class="op">.</span><span class="attr">SendChatPacket</span><span class="op">(</span><span class="id">statusMinusCommand</span><span class="op">)</span></div><div class="l" style="left:120.57px;top:738.00px"><span class="kw">except</span> <span class="kw2">KeyError</span><span class="op">,</span> <span class="id">msg</span><span class="op">:</span></div><div class="l" style="left:146.13px;top:751.00px"><span class="id">dbg</span><span class="op">.</span><span class="attr">TraceError</span><span class="op">(</span><span class="str">&quot;CharacterWindow.<i class="u">_</i><i class="u">_</i>OnClickStatusMinusButton KeyError: %s&quot;</span><span class="op">,</span> <span class="id">msg</span><span class="op">)</span></div>
</body></html>
